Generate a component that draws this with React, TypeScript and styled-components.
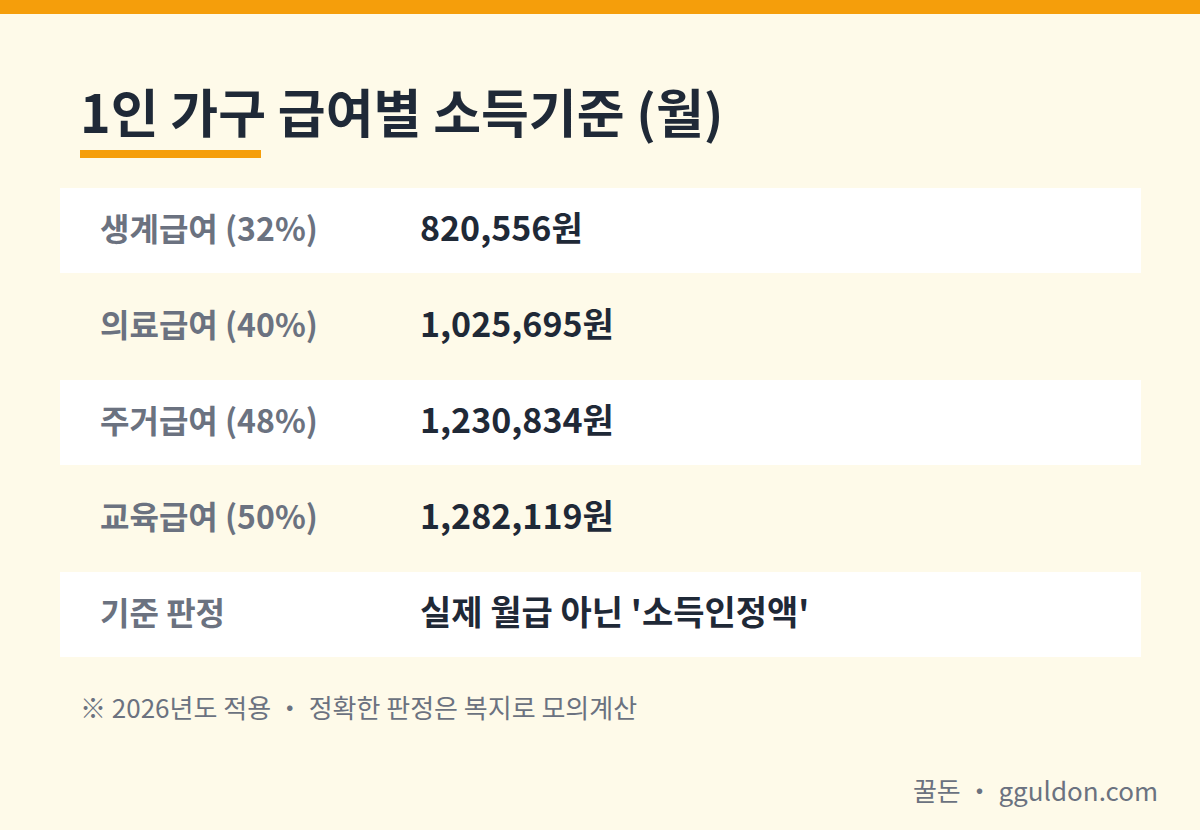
import React from "react";
import styled, { createGlobalStyle } from "styled-components";

const Global = createGlobalStyle`
  html, body { margin: 0; padding: 0; }
  body {
    width: 1200px;
    height: 830px;
    overflow: hidden;
    background: #fefae9;
    font-family: "Noto Sans CJK KR", "Noto Sans", sans-serif;
  }
`;

const Page = styled.div`
  width: 1200px;
  height: 830px;
  background: #fefae9;
  display: flex;
  flex-direction: column;
  box-sizing: border-box;
`;

const TopBar = styled.div`
  height: 14px;
  background: #f59e0b;
  flex: none;
`;

const Content = styled.div`
  display: flex;
  flex-direction: column;
  padding: 0 59px 0 60px;
`;

const TitleWrap = styled.div`
  padding: 67px 0 0 20px;
  display: flex;
  flex-direction: column;
  align-items: flex-start;
`;

const Title = styled.h1`
  margin: 0;
  font-size: 52px;
  line-height: 60px;
  font-weight: 700;
  color: #1f2937;
`;

const Underline = styled.div`
  width: 181px;
  height: 8px;
  margin-top: 9px;
  background: #f59e0b;
`;

const Table = styled.div`
  margin-top: 30px;
  display: flex;
  flex-direction: column;
  gap: 11px;
`;

const Row = styled.div<{ $filled: boolean }>`
  height: 85px;
  box-sizing: border-box;
  display: flex;
  align-items: center;
  padding: 0 0 8px 40px;
  background: ${(p) => (p.$filled ? "#ffffff" : "transparent")};
`;

const Label = styled.div`
  width: 320px;
  font-size: 32px;
  font-weight: 700;
  color: #6b7280;
`;

const Value = styled.div`
  font-size: 34px;
  font-weight: 700;
  color: #1f2937;
`;

const Note = styled.div`
  margin-top: 32px;
  padding-left: 20px;
  font-size: 26px;
  line-height: 36px;
  color: #6b7280;
`;

const Footer = styled.div`
  margin-top: auto;
  margin-bottom: 22px;
  padding-right: 42px;
  align-self: flex-end;
  font-size: 26px;
  line-height: 36px;
  color: #6b7280;
`;

const rows = [
  ["생계급여 (32%)", "820,556원"],
  ["의료급여 (40%)", "1,025,695원"],
  ["주거급여 (48%)", "1,230,834원"],
  ["교육급여 (50%)", "1,282,119원"],
  ["기준 판정", "실제 월급 아닌 '소득인정액'"],
];

export default function App() {
  return (
    <Page>
      <Global />
      <TopBar />
      <Content>
        <TitleWrap>
          <Title>1인 가구 급여별 소득기준 (월)</Title>
          <Underline />
        </TitleWrap>
        <Table>
          {rows.map(([l, v], i) => (
            <Row key={l} $filled={i % 2 === 0}>
              <Label>{l}</Label>
              <Value>{v}</Value>
            </Row>
          ))}
        </Table>
        <Note>※ 2026년도 적용 ・ 정확한 판정은 복지로 모의계산</Note>
      </Content>
      <Footer>꿀돈 ・ gguldon.com</Footer>
    </Page>
  );
}
